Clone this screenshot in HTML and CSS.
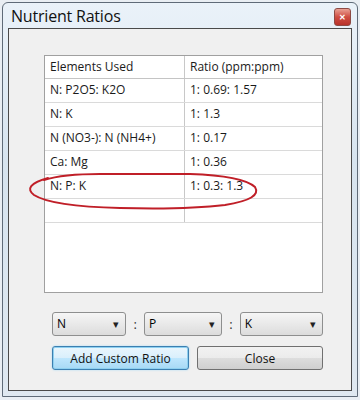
FILE: index.html
```html
<!DOCTYPE html>
<html lang="en">

<head>
    <meta charset="UTF-8">
    <meta name="viewport" content="width=device-width, initial-scale=1.0">
    <title>Nutrient Ratios</title>
    <link rel="stylesheet" href="styles.css">
</head>

<body>
    <div class="window">
        <div class="title-bar">
            <span class="title">Nutrient Ratios</span>
            <span class="close-x">&#x2715;</span>
        </div>

        <div class="client">
            <!-- Ratio list -->
            <div class="grid">
                <div class="row head">
                    <div class="cell first">Elements Used</div>
                    <div class="cell">Ratio (ppm:ppm)</div>
                </div>
                <div class="row">
                    <div class="cell first">N: P2O5: K2O</div>
                    <div class="cell">1: 0.69: 1.57</div>
                </div>
                <div class="row">
                    <div class="cell first">N: K</div>
                    <div class="cell">1: 1.3</div>
                </div>
                <div class="row">
                    <div class="cell first">N (NO3-): N (NH4+)</div>
                    <div class="cell">1: 0.17</div>
                </div>
                <div class="row">
                    <div class="cell first">Ca: Mg</div>
                    <div class="cell">1: 0.36</div>
                </div>
                <div class="row">
                    <div class="cell first">N: P: K</div>
                    <div class="cell">1: 0.3: 1.3</div>
                </div>
                <div class="row">
                    <div class="cell first"></div>
                    <div class="cell"></div>
                </div>
            </div>

            <!-- Custom ratio pickers -->
            <div class="pickers">
                <div class="combo combo-n">N <span class="arrow">&#9662;</span></div>
                <span class="colon">:</span>
                <div class="combo combo-p">P <span class="arrow">&#9662;</span></div>
                <span class="colon">:</span>
                <div class="combo combo-k">K <span class="arrow">&#9662;</span></div>
            </div>

            <div class="buttons">
                <button class="btn btn-default">Add Custom Ratio</button>
                <button class="btn btn-close">Close</button>
            </div>
        </div>
    </div>

    <!-- hand drawn mark around the new row -->
    <svg class="scribble" width="360" height="400" viewBox="0 0 360 400">
        <path d="M44 180 C60 175 80 174 100 174 L190 174 C222 175 246 179 255 187 C260 195 250 201 225 205 C200 208 160 209 120 208 C80 207 48 204 34 195 C26 189 30 183 48 178"
            fill="none" stroke="#c01f28" stroke-width="2" stroke-linecap="round" />
    </svg>
</body>

</html>
```

FILE: styles.css
```css
body {
    margin: 0;
    width: 360px;
    height: 400px;
    background: #e9eef3;
    font-family: "Open Sans", "Noto Sans", Arial, sans-serif;
    overflow: hidden;
}

.window {
    margin: 2px 2px 0 2px;
    height: 395px;
    border: 1px solid #5f6b78;
    border-radius: 6px 6px 0 0;
    background: linear-gradient(180deg, #eaf2f9 0%, #d7e4ef 40%, #dfe8f0 100%);
    box-sizing: border-box;
    padding: 0 5px 5px 5px;
    display: flex;
    flex-direction: column;
}

.title-bar {
    height: 25px;
    display: flex;
    align-items: center;
    justify-content: space-between;
}

.title {
    font-size: 16px;
    color: #111;
    margin-left: 3px;
    margin-top: 1px;
    letter-spacing: -0.2px;
}

.close-x {
    width: 15px;
    height: 16px;
    margin-top: 2px;
    margin-right: 1px;
    background: linear-gradient(180deg, #e9a093 0%, #cf4d42 50%, #b8322a 100%);
    border: 1px solid #8d4a44;
    border-radius: 3px;
    color: #fff;
    font-size: 8px;
    font-weight: bold;
    display: flex;
    align-items: center;
    justify-content: center;
}

.client {
    flex: 1;
    border: 1px solid #4a4a4a;
    background: #f0f0f0;
    padding: 26px 28px 0 35px;
}

.grid {
    height: 238px;
    border: 1px solid #a0a0a0;
    background: #fff;
    box-sizing: border-box;
}

.row {
    display: flex;
    height: 24px;
    border-bottom: 1px solid #dadada;
    box-sizing: border-box;
}

.row.head {
    height: 23px;
    border-bottom: 1px solid #c4c4c4;
}

.cell {
    flex: 1;
    font-size: 12px;
    color: #1a1a1a;
    line-height: 22px;
    padding-left: 5px;
}

.cell.first {
    flex: 0 0 134px;
    border-right: 1px solid #c8c8c8;
}

.pickers {
    display: flex;
    align-items: center;
    margin: 19px 0 0 8px;
}

.combo {
    height: 24px;
    box-sizing: border-box;
    border: 1px solid #8e8f8f;
    border-radius: 3px;
    background: linear-gradient(180deg, #f6f6f6 0%, #e9e9e9 50%, #dcdcdc 100%);
    font-size: 12px;
    line-height: 22px;
    padding-left: 4px;
    display: flex;
    justify-content: space-between;
}

.combo-n {
    width: 76px;
}

.combo-p {
    width: 80px;
}

.combo-k {
    width: 85px;
}

.arrow {
    font-size: 11px;
    margin-right: 6px;
    color: #222;
}

.colon {
    width: 18px;
    text-align: center;
    font-size: 13px;
    color: #333;
}

.buttons {
    display: flex;
    gap: 8px;
    margin: 10px 0 0 8px;
}

.btn {
    height: 24px;
    font-family: "Open Sans", "Noto Sans", Arial, sans-serif;
    font-size: 12px;
    color: #111;
    border-radius: 3px;
    padding: 0;
}

.btn-default {
    width: 137px;
    border: 1px solid #3c7fb1;
    background: linear-gradient(180deg, #eaf6fd 0%, #d9effc 50%, #bee6fd 51%, #a7d9f5 100%);
    box-shadow: 0 0 0 1px #8ed0f0 inset, 0 0 2px #9fd8f5;
}

.btn-close {
    width: 126px;
    border: 1px solid #707070;
    background: linear-gradient(180deg, #f2f2f2 0%, #ebebeb 50%, #dddddd 51%, #cfcfcf 100%);
}

.scribble {
    position: absolute;
    left: 0;
    top: 0;
    pointer-events: none;
}
```
